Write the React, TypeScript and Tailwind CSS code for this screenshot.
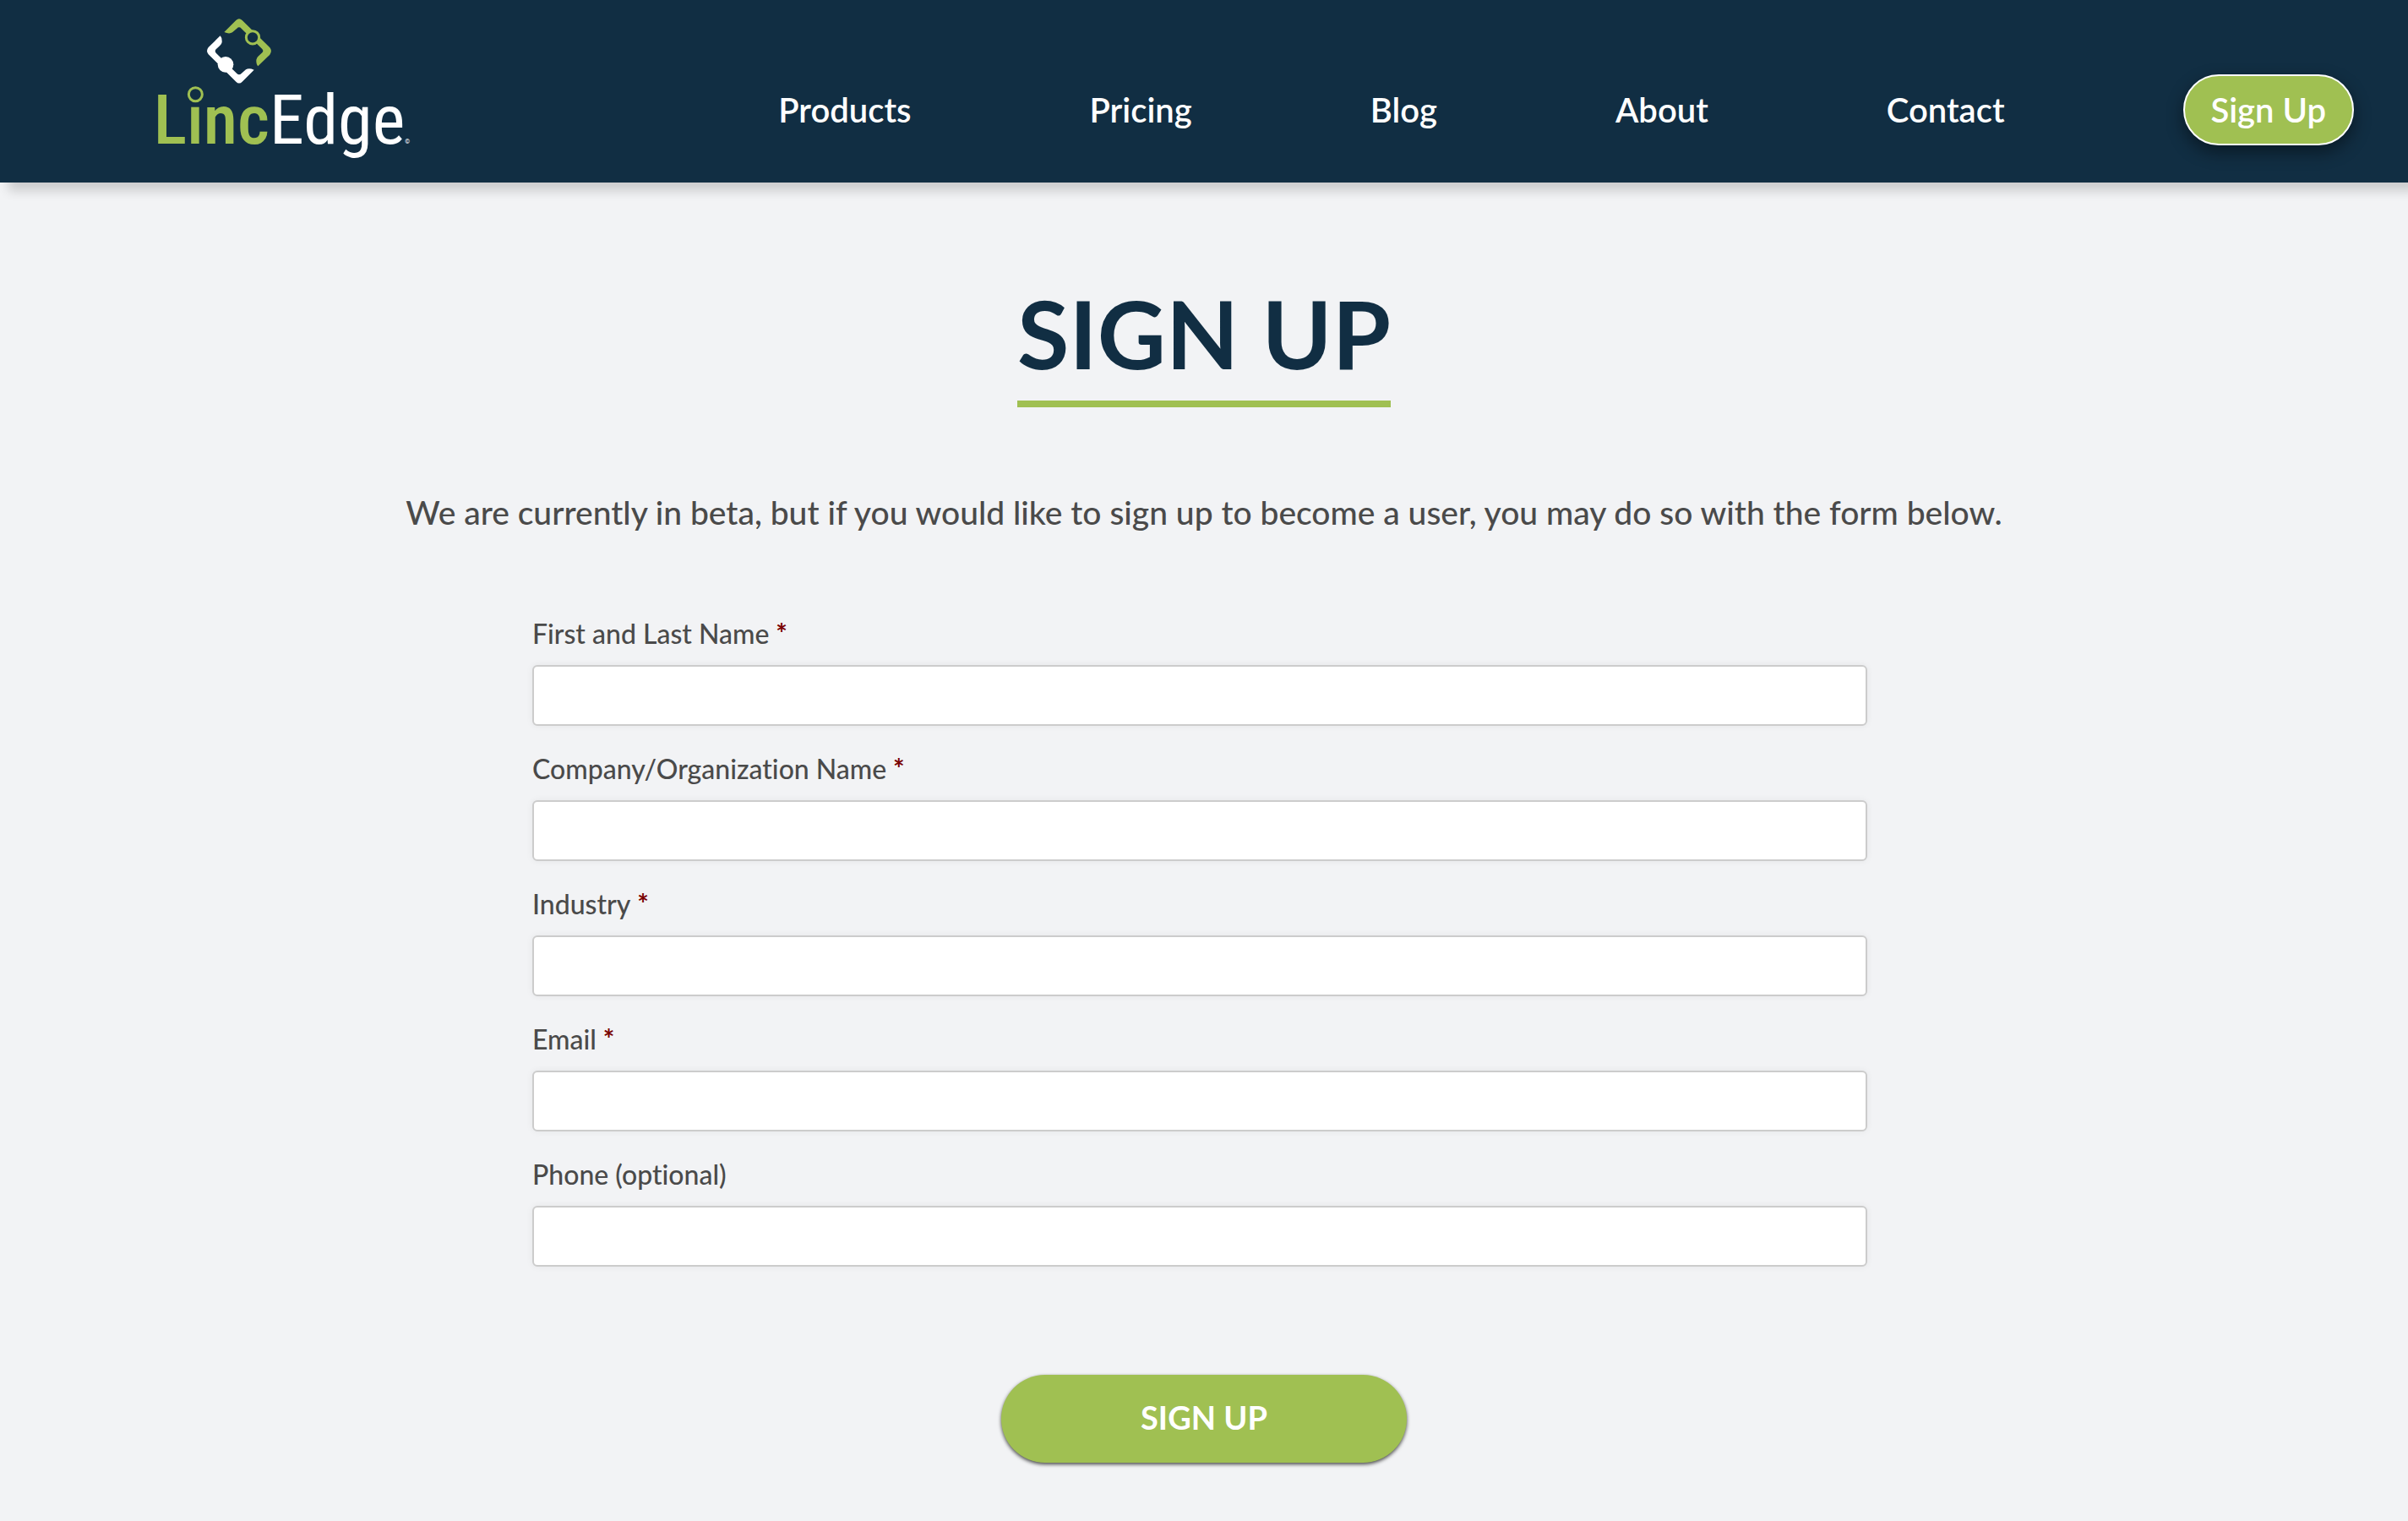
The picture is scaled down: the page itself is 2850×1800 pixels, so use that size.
import React from 'react';

const links = ['Products', 'Pricing', 'Blog', 'About', 'Contact'];

const fields = [
  { id: 'name', label: 'First and Last Name', type: 'text', required: true },
  { id: 'company', label: 'Company/Organization Name', type: 'text', required: true },
  { id: 'industry', label: 'Industry', type: 'text', required: true },
  { id: 'email', label: 'Email', type: 'email', required: true },
  { id: 'phone', label: 'Phone (optional)', type: 'tel', required: false },
];

const bracket =
  'M316 114 L358 72 Q369 61 380 72 L478 169 Q488 181 478 194 L436 235 Q429 228 430 212 Q431 205 438 199 L451 187 Q457 181 451 174 L377 101 Q369 93 361 101 L345 115 Q334 122 316 114 Z';

function Logo() {
  return (
    <svg viewBox="45 60 960 540" className="h-[180px] w-[320px]" role="img" aria-label="LincEdge">
      <path d={bracket} fill="#a0c052" />
      <circle cx="417" cy="133" r="23" fill="#112e43" stroke="#a0c052" strokeWidth="9" />
      <g transform="rotate(180 369 181)">
        <path d={bracket} fill="#fff" />
        <circle cx="417" cy="133" r="28" fill="#fff" />
      </g>
      <text x="65" y="511" fontSize="247" fontFamily="'Roboto Condensed', Roboto, sans-serif">
        <tspan fill="#a0c052" fontWeight="500">Linc</tspan>
        <tspan fill="#fff" fontWeight="400">Edge</tspan>
        <tspan fill="#fff" fontWeight="700" fontSize="22">©</tspan>
      </text>
      <circle cx="214" cy="335" r="24" fill="#112e43" stroke="#a0c052" strokeWidth="9" />
    </svg>
  );
}

export default function App() {
  return (
    <div className="min-h-screen bg-[#f2f3f5] font-['Lato',sans-serif] text-[#4a4a4a] [font-variant-ligatures:none]">
      <header className="flex h-[216px] items-start justify-between bg-[#112e43] pr-16 pl-[175px] pt-5 shadow-[10px_10px_12px_rgba(0,0,0,0.16)]">
        <a href="#home">
          <Logo />
        </a>
        <nav className="flex items-center gap-[211px] pt-[68px] text-[40px] leading-[48px] font-semibold text-white">
          {links.map((l) => (
            <a key={l} href={'#' + l.toLowerCase()}>
              {l}
            </a>
          ))}
          <a
            href="#signup"
            className="rounded-full border-2 border-white bg-[#a0c052] px-[31px] py-4 shadow-[0_8px_20px_rgba(0,0,0,0.45)]"
          >
            Sign Up
          </a>
        </nav>
      </header>

      <main className="flex flex-col items-center">
        <h1 className="mt-28 border-b-8 border-[#a0c052] pb-[14px] text-[112px] leading-[132px] font-bold text-[#112e43]">
          SIGN UP
        </h1>
        <p className="mt-[98px] text-[39px] leading-[52px] font-medium">
          We are currently in beta, but if you would like to sign up to become a user, you may do so with the form
          below.
        </p>

        <form className="mt-[91px] flex w-full max-w-[1590px] flex-col" onSubmit={(e) => e.preventDefault()}>
          <div className="flex flex-col gap-6 pr-2.5">
            {fields.map((f) => (
              <div key={f.id} className="flex flex-col gap-2.5">
                <label htmlFor={f.id} className="text-[32px] leading-[54px] font-medium">
                  {f.label}
                  {f.required && <span className="font-bold text-[#790000]"> *</span>}
                </label>
                <input
                  id={f.id}
                  type={f.type}
                  required={f.required}
                  className="h-[72px] w-full rounded-md border-2 border-[#ccc] bg-white px-4 text-[32px] shadow-[0_0_8px_rgba(0,0,0,0.06)] outline-none"
                />
              </div>
            ))}
          </div>
          <button
            type="submit"
            className="mt-32 h-[104px] w-[480px] self-center rounded-full bg-[#a0c052] pb-1 text-[38px] font-bold text-white shadow-[0_2px_4px_rgba(0,0,0,0.7)]"
          >
            SIGN UP
          </button>
        </form>
      </main>
    </div>
  );
}
